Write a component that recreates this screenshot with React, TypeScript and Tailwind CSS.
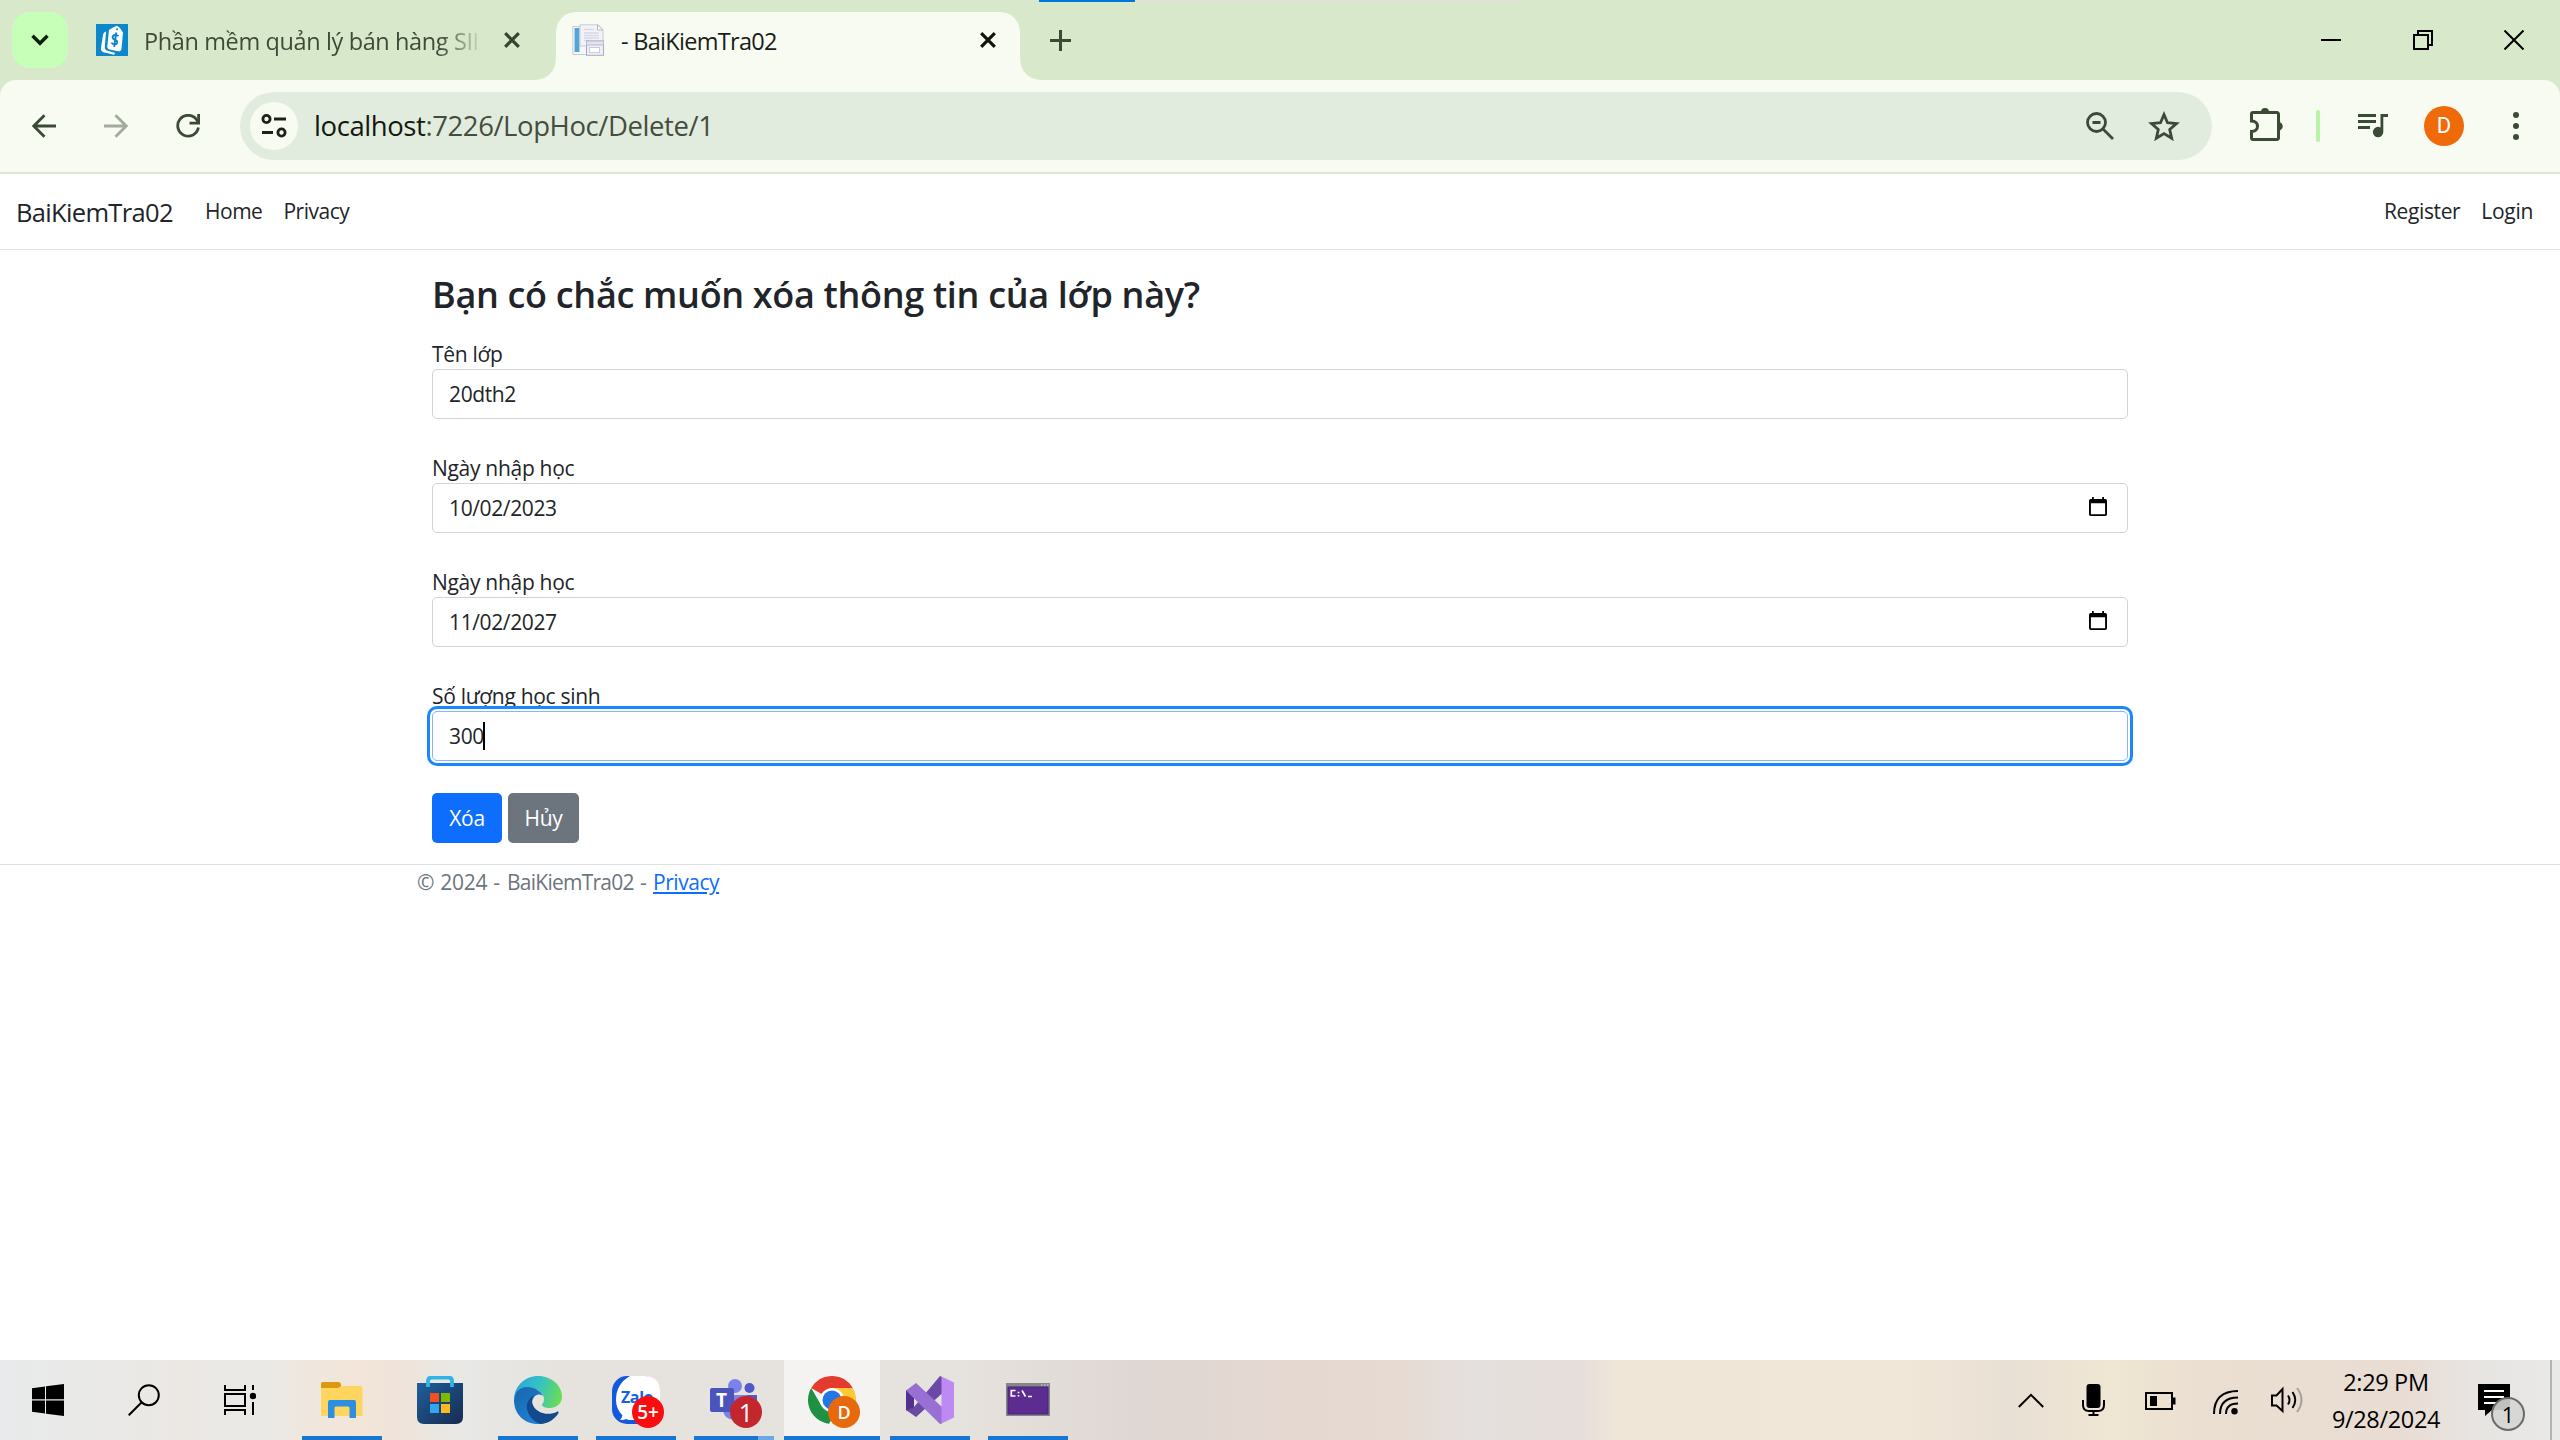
import React from "react";

const UI = "[font-family:'Open_Sans','Noto_Sans',sans-serif]";

function T({ children, className = "" }: { children: React.ReactNode; className?: string }) {
  return <span className={"inline-block whitespace-nowrap " + className}>{children}</span>;
}

/* ---------- browser chrome ---------- */

const Close = ({ className = "" }: { className?: string }) => (
  <svg className={className} width="16" height="16" viewBox="0 0 16 16" fill="none" stroke="currentColor" strokeWidth="3.2">
    <path d="M1.2 1.2l13.6 13.6M14.8 1.2L1.2 14.8" />
  </svg>
);

function PriceTagIcon() {
  return (
    <svg width="32" height="32" viewBox="0 0 32 32">
      <rect width="32" height="32" fill="#0d87cc" />
      <path d="M10 7.500Q7.500 8 7.200 10L5 23.500q-.6 3.700 2.500 4.700L18 30.800l1.200-1.800-8.500-2.500q-2.200-.8-1.900-3.200z" fill="#fff" />
      <path d="M13 6Q17 3 21 1.800q4 2 6 6.700L25.500 25q-.6 2.800-3.200 2.300L13.500 25.500q-2.500-.6-2.200-3.200z" fill="#fff" />
      <path d="M22.400 12.200q-1.300-1.500-3.500-1.200-2.500.5-2.300 2.500.2 1.700 2.600 2.500 2.400.8 2 2.800-.5 1.900-2.800 1.700-2.100-.2-2.900-1.800M20.300 8.500l-2.200 14.500" fill="none" stroke="#0d87cc" strokeWidth="1.900" />
      <circle cx="21" cy="5.200" r="1" fill="#0d87cc" />
    </svg>
  );
}

function DocumentIcon() {
  return (
    <svg width="32" height="32" viewBox="0 0 32 32">
      <path d="M.8 2.500H24V30.500H.8z" fill="#f4f8fb" stroke="#c3ccd4" />
      <rect x="2.500" y="4" width="5" height="24" fill="#55a4d8" />
      <path d="M8 .8h18l5 5V22H8z" fill="#f3f2f8" stroke="#c9c9d4" />
      <path d="M25.500.8V6h5.500z" fill="#fff" stroke="#a9a9b4" strokeWidth=".8" />
      <path d="M12 5.500h10M12 9h15M12 11.500h15M12 14h15M12 16.500h6" stroke="#d5dae6" strokeWidth="1.500" />
      <rect x="14.500" y="17" width="17" height="14.300" fill="#eeeef6" stroke="#a8abc0" />
      <rect x="14.500" y="17" width="17" height="4" fill="#e0e2ef" stroke="#b8bacb" />
      <rect x="17.500" y="23.500" width="10" height="5" fill="#fff" stroke="#c9cbdc" />
    </svg>
  );
}

function Flare({ right = false }: { right?: boolean }) {
  return (
    <svg className={right ? "absolute bottom-0 left-full" : "absolute bottom-0 right-full"} width="24" height="24" viewBox="0 0 24 24">
      <path d={right ? "M0 0V24H24Q0 24 0 0z" : "M24 0V24H0Q24 24 24 0z"} fill="#f8fbf2" />
    </svg>
  );
}

function TabStrip() {
  return (
    <div className="relative flex h-20 items-center bg-[#d8e8cb] pl-3">
      <div className="absolute left-[1039px] top-0 flex h-0.5 w-[484px] bg-[#dfe4d7]">
        <div className="h-0.5 w-24 bg-[#0078d7]" />
      </div>
      <div className="flex size-14 items-center justify-center rounded-[18px] bg-[#c8ffb8]">
        <svg width="18" height="12" viewBox="0 0 18 12" fill="none" stroke="#0d1f08" strokeWidth="3.400"><path d="M1.500 1.800L9 9.300l7.500-7.500" /></svg>
      </div>
      <div className="ml-7 flex h-8 items-center">
        <PriceTagIcon />
        <div className="ml-4 w-[336px] overflow-hidden pt-0.5 text-[23.500px] leading-8 tracking-[-0.38px] text-[#3f4a38] [mask-image:linear-gradient(to_right,#000_295px,transparent_340px)]">
          <T>Phần mềm quản lý bán hàng SII</T>
        </div>
        <Close className="ml-6 text-[#37432f]" />
      </div>
      <div className="relative ml-9 mt-3 flex h-[68px] w-[464px] items-center rounded-t-[20px] bg-[#f8fbf2] pb-3 pl-4 pr-6">
        <Flare />
        <Flare right />
        <DocumentIcon />
        <div className="ml-[17px] pt-0.5 text-[23.500px] leading-8 tracking-[-0.7px] text-[#1a1d17]"><T>- BaiKiemTra02</T></div>
        <Close className="ml-auto text-[#11150e]" />
      </div>
      <svg className="ml-[30px]" width="21" height="21" viewBox="0 0 21 21" stroke="#3b4a35" strokeWidth="3"><path d="M0 10.500h21M10.500 0v21" /></svg>
      <div className="ml-auto mr-9 flex items-center gap-[71.500px] text-black">
        <svg width="20" height="20" viewBox="0 0 20 20" stroke="currentColor" strokeWidth="2"><path d="M0 10h20" /></svg>
        <svg width="20" height="20" viewBox="0 0 20 20" fill="none" stroke="currentColor" strokeWidth="2"><path d="M1 5h14v14H1zM5 5V1h14v14h-4" /></svg>
        <svg width="20" height="20" viewBox="0 0 20 20" stroke="currentColor" strokeWidth="2"><path d="M.5.500l19 19M19.500.500l-19 19" /></svg>
      </div>
    </div>
  );
}

function Toolbar() {
  return (
    <div className="bg-[#d8e8cb]">
      <div className="flex h-[94px] items-center rounded-t-[16px] border-b-2 border-[#dfe4d9] bg-[#f8fbf2] pl-8 text-[#3b4a35]">
        <svg width="24" height="24" viewBox="0 0 24 24" fill="none" stroke="currentColor" strokeWidth="2.800"><path d="M24 12H2M12.500 1.200L1.800 12l10.700 10.800" /></svg>
        <svg className="ml-12 text-[#a2ab9c]" width="24" height="24" viewBox="0 0 24 24" fill="none" stroke="currentColor" strokeWidth="2.800"><path d="M0 12h22M11.500 1.200L22.200 12 11.500 22.800" /></svg>
        <svg className="ml-12" width="24" height="24" viewBox="0 0 24 24" fill="none" stroke="currentColor" strokeWidth="2.800">
          <path d="M22.400 13.500A10.400 10.400 0 1 1 20.500 5.500L22 8" /><path d="M22.600 0v9.200H13.500" />
        </svg>
        <div className="ml-10 flex h-[68px] w-[1972px] items-center rounded-full bg-[#e2ecde] pl-2.5 pr-8">
          <div className="flex size-12 items-center justify-center rounded-full bg-[#f8fbf2]">
            <svg width="26" height="24" viewBox="0 0 26 24" fill="none" stroke="#1c2119" strokeWidth="2.800">
              <circle cx="5.500" cy="5" r="3.600" /><path d="M13 5h12M1 18.500h11" /><circle cx="20.500" cy="18.500" r="3.600" />
            </svg>
          </div>
          <div className="ml-4 text-[27.500px] leading-10 tracking-[-0.42px] text-[#454c40]">
            <T><span className="text-[#141811]">localhost</span>:7226/LopHoc/Delete/1</T>
          </div>
          <svg className="ml-auto" width="28" height="28" viewBox="0 0 28 28" fill="none" stroke="#3f473b" strokeWidth="2.800">
            <circle cx="10.500" cy="10.500" r="9" /><path d="M6.500 10.500h8M17 17l10 10" />
          </svg>
          <svg className="ml-[34px]" width="32" height="30" viewBox="0 0 32 30" fill="none" stroke="#3f473b" strokeWidth="2.800">
            <path d="M16 3.500l3.500 8.200 9 .8-6.800 6 2 8.800-7.700-4.700-7.700 4.700 2-8.800-6.800-6 9-.8z" />
          </svg>
        </div>
        <svg className="mb-1 ml-[37px]" width="34" height="34" viewBox="0 0 34 34">
          <path d="M4 6h24a1.500 1.500 0 0 1 1.500 1.500v24a1.500 1.500 0 0 1-1.500 1.500H4a1.500 1.500 0 0 1-1.500-1.500V25c8 0 8-10.500 0-10.500v-7A1.500 1.500 0 0 1 4 6z" transform="translate(0 -.5)" fill="none" stroke="currentColor" strokeWidth="3" />
          <path d="M12 5a4 4 0 0 1 8 0zM29.500 15a4.200 4.200 0 0 1 0 8.500z" fill="currentColor" />
        </svg>
        <div className="ml-[33px] h-8 w-1 rounded-sm bg-[#b9f3a5]" />
        <svg className="ml-[38px]" width="31" height="24" viewBox="0 0 31 24">
          <path d="M0 1.500h18M0 7.500h18M0 13.500h12" stroke="currentColor" strokeWidth="2.800" />
          <path d="M22.500 0H30v3h-4.700v15a5.200 5.200 0 1 1-2.800-4.600z" fill="currentColor" />
        </svg>
        <div className="ml-[35px] flex size-10 items-center justify-center rounded-full bg-[#f06a0a] text-[22px] leading-none text-white [font-family:Roboto,sans-serif]">D</div>
        <svg className="ml-[49px]" width="6" height="28" viewBox="0 0 6 28" fill="currentColor"><circle cx="3" cy="3" r="3" /><circle cx="3" cy="14" r="3" /><circle cx="3" cy="25" r="3" /></svg>
      </div>
    </div>
  );
}

/* ---------- page ---------- */

function CalendarIcon() {
  return (
    <svg width="18" height="19" viewBox="0 0 18 19">
      <path d="M3 0h1.800v2h8.400V0H15v2h1.200Q18 2 18 3.800v13.400Q18 19 16.200 19H1.800Q0 19 0 17.200V3.800Q0 2 1.800 2H3zM1.900 6.200v11h14.200v-11z" fill="#000" fillRule="evenodd" />
    </svg>
  );
}

function Field({ label, value, date = false, focused = false }: { label: string; value: string; date?: boolean; focused?: boolean }) {
  return (
    <div className="mb-8 h-[82px]">
      <div className="h-8 pt-px text-[21px] leading-8 tracking-[-0.3px]"><T>{label}</T></div>
      <div
        className={
          "flex h-[50px] items-center rounded-[5px] border bg-white pl-4 pr-5 text-[21px] tracking-[-0.38px] " +
          (focused ? "border-[#86b7fe] outline-[3.500px] outline-offset-[2px] outline-[#1a86ff] outline-solid" : "border-[#ced4da]")
        }
      >
        <T className="pt-0.5">{value}</T>
        {focused && <span className="-ml-px h-7 w-0.5 bg-black" />}
        {date && <span className="mb-1 ml-auto"><CalendarIcon /></span>}
      </div>
    </div>
  );
}

function Page() {
  return (
    <div className="flex-1 bg-white text-[#212529]">
      <div className="flex h-[76px] items-center border-b border-[#dee2e6] pl-4 pr-[27px] pt-px text-[21px] tracking-[-0.48px]">
        <T className="w-[157px] text-[25.500px] tracking-[-0.67px]">BaiKiemTra02</T>
        <T className="ml-8">Home</T>
        <T className="ml-[21px]">Privacy</T>
        <T className="ml-auto tracking-[-0.38px]">Register</T>
        <T className="ml-[21px] tracking-[-0.3px]">Login</T>
      </div>
      <main className="mx-auto w-[1696px]">
        <h3 className="h-[87px] pt-[22px] text-[36px] font-semibold leading-[46px] tracking-[-0.32px]"><T>Bạn có chắc muốn xóa thông tin của lớp này?</T></h3>
        <Field label="Tên lớp" value="20dth2" />
        <Field label="Ngày nhập học" value="10/02/2023" date />
        <Field label="Ngày nhập học" value="11/02/2027" date />
        <Field label="Số lượng học sinh" value="300" focused />
        <div className="flex gap-1.5 text-[21px] tracking-[-0.3px] text-white">
          <div className="flex h-[50px] w-[70px] items-center justify-center rounded-[5px] bg-[#0d6efd] pt-0.5"><T>Xóa</T></div>
          <div className="flex h-[50px] w-[71px] items-center justify-center rounded-[5px] bg-[#6c757d] pt-0.5"><T>Hủy</T></div>
        </div>
      </main>
      <footer className="mt-[21px] flex border-t border-[#dee2e6] pl-[417px] pt-px text-[21px] leading-8 text-[#6c757d]">
        <T className="w-[90px] tracking-[-0.3px] [word-spacing:1px]">© 2024 -</T>
        <T className="w-[133px] tracking-[-0.75px]">BaiKiemTra02</T>
        <T className="w-[13px]">-</T>
        <T className="tracking-[-0.45px] text-[#0d6efd] underline">Privacy</T>
      </footer>
    </div>
  );
}

/* ---------- taskbar ---------- */

function TaskSlot({ className = "", bar = "w-20", children, partial = false }: { className?: string; bar?: string; children: React.ReactNode; partial?: boolean }) {
  return (
    <div className={"flex h-20 flex-col items-center " + className}>
      <div className="flex h-[76px] items-center pt-1">{children}</div>
      <div className={"flex h-1 justify-end bg-[#1776d2] " + bar}>{partial && <div className="h-1 w-4 bg-[#6aa9e4]" />}</div>
    </div>
  );
}

function Badge({ className, children }: { className: string; children: React.ReactNode }) {
  return <div className={"absolute left-5 top-5 flex size-8 items-center justify-center rounded-full leading-none text-white " + className}>{children}</div>;
}

function Taskbar() {
  return (
    <div className="flex h-20 items-center bg-[linear-gradient(to_right,#e8eaeb_0px,#ebe8e4_180px,#eae9e6_260px,#f3e5d8_350px,#efe4da_400px,#e8e8e6_460px,#e6e3de_560px,#e6e2dd_960px,#dfd7d3_1140px,#e5d8d1_1300px,#e6dad3_1400px,#e4e0dd_1470px,#e6dedb_1580px,#f0e6d7_1620px,#f1e7d8_1900px,#e9e0d5_2010px,#efe6d3_2110px,#ebdfd1_2200px,#e9dcd3_2400px,#e7e4e1_2470px,#e9e9e8_2560px)]">
      <svg className="ml-8" width="32" height="32" viewBox="0 0 32 32"><path d="M0 4.300L13 2.500V15.300H0zM14 2.300L32 0V15.300H14zM0 16.500H13V29.500L0 27.800zM14 16.500H32V32L14 29.700z" /></svg>
      <svg className="ml-16" width="32" height="32" viewBox="0 0 32 32" fill="none" stroke="#000" strokeWidth="2"><circle cx="20.800" cy="11.200" r="10" /><path d="M13.500 18.500L.700 31.300" /></svg>
      <svg className="ml-16" width="32" height="30" viewBox="0 0 32 30" fill="none" stroke="#000" strokeWidth="2">
        <path d="M1 0v5h20V0M1 9h20v12H1zM1 30v-5h20v5M29 0v5M29 17v13" /><circle cx="29" cy="11" r="3.200" fill="#000" stroke="none" />
      </svg>
      <TaskSlot className="ml-[46px] w-20">
        <svg width="42" height="36" viewBox="0 0 42 36">
          <path d="M0 1.500Q0 0 1.500 0H17q3 0 3 3t-3 4H0z" fill="#dc9a12" />
          <path d="M0 6h17l4-2h18q2.500 0 2.500 2.500V34H0z" fill="#fdd55f" />
          <path d="M7 36V20q0-2 2-2h24q2 0 2 2v16h-6.500V26q0-1.500-1.500-1.500H15q-1.500 0-1.500 1.500v10z" fill="#2b8ee0" />
        </svg>
      </TaskSlot>
      <div className="ml-[35px]">
        <svg width="46" height="48" viewBox="0 0 46 48">
          <defs><linearGradient id="bag" x1="0" y1="0" x2="1" y2="1"><stop offset="0" stopColor="#205f9d" /><stop offset="1" stopColor="#162b50" /></linearGradient></defs>
          <path d="M0 7h46v34q0 7-7 7H7q-7 0-7-7z" fill="url(#bag)" />
          <path d="M11 11V5q0-3.500 3.500-3.500h17Q35 1.500 35 5v6" fill="none" stroke="#2fb4ea" strokeWidth="3.800" />
          <path d="M13 17h9v9h-9z" fill="#f25022" /><path d="M24 17h9v9h-9z" fill="#7fba00" /><path d="M13 28h9v9h-9z" fill="#35a7f0" /><path d="M24 28h9v9h-9z" fill="#ffb920" />
        </svg>
      </div>
      <TaskSlot className="ml-[35px] w-20">
        <svg width="48" height="48" viewBox="0 0 48 48">
          <defs>
            <linearGradient id="e1" x1="0" y1=".3" x2="1" y2=".5"><stop offset="0" stopColor="#2aa5dc" /><stop offset=".5" stopColor="#35c1c4" /><stop offset="1" stopColor="#6bdc55" /></linearGradient>
            <linearGradient id="e2" x1="0" y1="0" x2=".7" y2="1"><stop offset="0" stopColor="#1b64ad" /><stop offset="1" stopColor="#1c84d4" /></linearGradient>
          </defs>
          <path d="M24 0C38 0 48 10 48 20.500 48 28 42 32 36 32c-5 0-8-1.500-8-3 0-1.300 2-2 2-6 0-5-5-10-13-10C6 13 1 19 0 24 0 10 11 0 24 0z" fill="url(#e1)" />
          <path d="M0 24C1 16 6 11 13 11c9 0 15 6 16 9-5-4-11 0-11 8 0 11 9 18 18 17-3 2-8 3-12 3C10 48 0 38 0 24z" fill="url(#e2)" />
          <path d="M20 19c-5 3-8 8-7 14 2 9 9 14 14 15 8-1 14-5 17.500-11 .5-1-.5-1.800-1.500-1.200C34 40.500 20 37 18 26c0-3 .5-5 2-7z" fill="#124a8d" />
        </svg>
      </TaskSlot>
      <TaskSlot className="ml-[18px] w-20">
        <div className="relative size-12">
          <svg width="48" height="48" viewBox="0 0 48 48">
            <rect width="46" height="48" rx="15" fill="#1259dd" />
            <path d="M18 0h14q16 0 16 16v12q0 16-16 16H18q-2 0-4-1-3 1.500-6 .5 2-1.500 2.500-4Q4 33 4 24q0-16 14-24z" fill="#fff" />
          </svg>
          <div className="absolute left-[9px] top-[11px] text-[16px] font-bold leading-5 tracking-tight text-[#1561e5]">Zalo</div>
          <Badge className="bg-[#f90d0f] text-[19px] font-semibold">5+</Badge>
        </div>
      </TaskSlot>
      <TaskSlot className="ml-[18px] w-20" partial>
        <div className="relative size-12">
          <svg width="48" height="48" viewBox="0 0 48 48">
            <circle cx="25" cy="10" r="7" fill="#7b83eb" /><circle cx="39.500" cy="12" r="5" fill="#5059c9" />
            <path d="M30 19h17v12q0 8-8 8h-9z" fill="#5059c9" /><path d="M13 19h24v14q0 11-12 11-12-1-12-11z" fill="#7b83eb" />
            <rect y="12" width="24" height="24" rx="2" fill="#4b53bc" />
          </svg>
          <div className="absolute left-[6px] top-[15px] text-[19px] font-bold leading-[18px] text-white">T</div>
          <Badge className="bg-[#c4262e] text-[25px]">1</Badge>
        </div>
      </TaskSlot>
      <TaskSlot className="ml-[10px] w-24 bg-[#f4f3f1]" bar="w-24">
        <div className="relative size-12">
          <svg width="48" height="48" viewBox="0 0 48 48">
            <path d="M24 24L3.200 12A24 24 0 0 1 44.800 12z" fill="#e33b2e" /><path d="M24 12h20.800A24 24 0 0 1 24 48l10.400-18z" fill="#fcc934" />
            <path d="M3.200 12l10.400 18L24 36l4 0-7 11.800A24 24 0 0 1 3.200 12z" fill="#1e9143" />
            <circle cx="24" cy="24" r="12" fill="#fff" /><circle cx="24" cy="24" r="9.500" fill="#2376e5" />
          </svg>
          <Badge className="bg-[#e8690b] text-[18px] font-semibold text-[#ffe0c8]">D</Badge>
        </div>
      </TaskSlot>
      <TaskSlot className="ml-[10px] w-20">
        <svg width="48" height="48" viewBox="0 0 48 48">
          <path d="M0 34L10 41 36 17.500V1L34 0 8 31z" fill="#6a4aa6" />
          <path d="M0 14l8 4v13.500L0 34.500z" fill="#52308f" />
          <path d="M0 14.500L10 7l26 24v16.500L34 48z" fill="#9a6fd3" />
          <path d="M35.500.600L48 6.500v35L35.500 47.500z" fill="#bd8af3" />
        </svg>
      </TaskSlot>
      <TaskSlot className="ml-[18px] w-20">
        <svg className="mb-px" width="44" height="33" viewBox="0 0 44 33">
          <rect width="44" height="33" fill="#85868a" /><rect x="2" y="4" width="40" height="27" fill="#5c2c91" stroke="#46207a" />
          <path d="M35 2h1.500M38 2h1.500M41 2h1.500" stroke="#ddd" />
          <path d="M9.500 7.500H5.300v5.500h4.200M12.500 8.700v1.500M12.500 12v1.500M16 7.500l3.500 6M22 13.500h4" fill="none" stroke="#fff" strokeWidth="1.700" />
        </svg>
      </TaskSlot>

      <div className="ml-auto flex items-center">
        <svg width="26" height="15" viewBox="0 0 26 15" fill="none" stroke="#000" strokeWidth="2"><path d="M.800 14L13 1.800 25.200 14" /></svg>
        <svg className="ml-[38px]" width="23" height="32" viewBox="0 0 23 32" fill="none" stroke="#000" strokeWidth="2">
          <rect x="4.500" y="0" width="14" height="24" rx="3" fill="#000" stroke="none" /><path d="M1 16v5q0 6 6 6h9q6 0 6-6v-5M11.500 27v4M6.500 31h10" />
        </svg>
        <svg className="ml-10 mt-0.5" width="31" height="18" viewBox="0 0 31 18" fill="none" stroke="#000" strokeWidth="2"><path d="M1 1h26v16H1z" /><path d="M5 4h7v10H5z" fill="#000" stroke="none" /><path d="M29 5.500v7" strokeWidth="3" /></svg>
        <svg className="ml-[37px] mt-1" width="26" height="25" viewBox="0 0 26 25" fill="none" stroke="#000" strokeWidth="2">
          <path d="M1 24Q1 1 25 1M7 24Q7 7.500 25 7.500M13 24q0-10.500 12-10.500" /><circle cx="21.500" cy="21.200" r="3.200" fill="#000" stroke="none" />
        </svg>
        <svg className="ml-[32px]" width="33" height="28" viewBox="0 0 33 28" fill="none" stroke="#000" strokeWidth="2">
          <path d="M1 9.500h4.500L11.500 3v22l-6-5.500H1z" /><path d="M17 9.500q3 4.500 0 9M21.500 6q5.500 8 0 16" /><path d="M26 2q9 12 0 24" stroke="#a9a199" />
        </svg>
        <div className="ml-7 flex w-[108px] flex-col items-center pt-0.5 text-[23.500px] leading-[37px] tracking-[-0.35px] text-black">
          <T>2:29 PM</T>
          <T>9/28/2024</T>
        </div>
        <div className="relative ml-[38px] size-8">
          <svg width="32" height="32" viewBox="0 0 32 32"><path d="M0 0h32v26H14l-7 6v-6H0z" /><path d="M6 7h20M6 13h20M6 19h14" stroke="#fff" strokeWidth="2" /></svg>
          <div className="absolute left-[13px] top-[13px] flex size-[34px] items-center justify-center rounded-full border-2 border-[#6b6b6b] bg-[#d5d5d4]/90 text-[22px] leading-none text-black">1</div>
        </div>
        <div className="ml-10 h-20 w-0.5 bg-[#b5b3b1]" />
        <div className="w-2" />
      </div>
    </div>
  );
}

export default function App() {
  return (
    <div className={"flex h-[1440px] w-[2560px] flex-col overflow-hidden " + UI}>
      <TabStrip />
      <Toolbar />
      <Page />
      <Taskbar />
    </div>
  );
}
